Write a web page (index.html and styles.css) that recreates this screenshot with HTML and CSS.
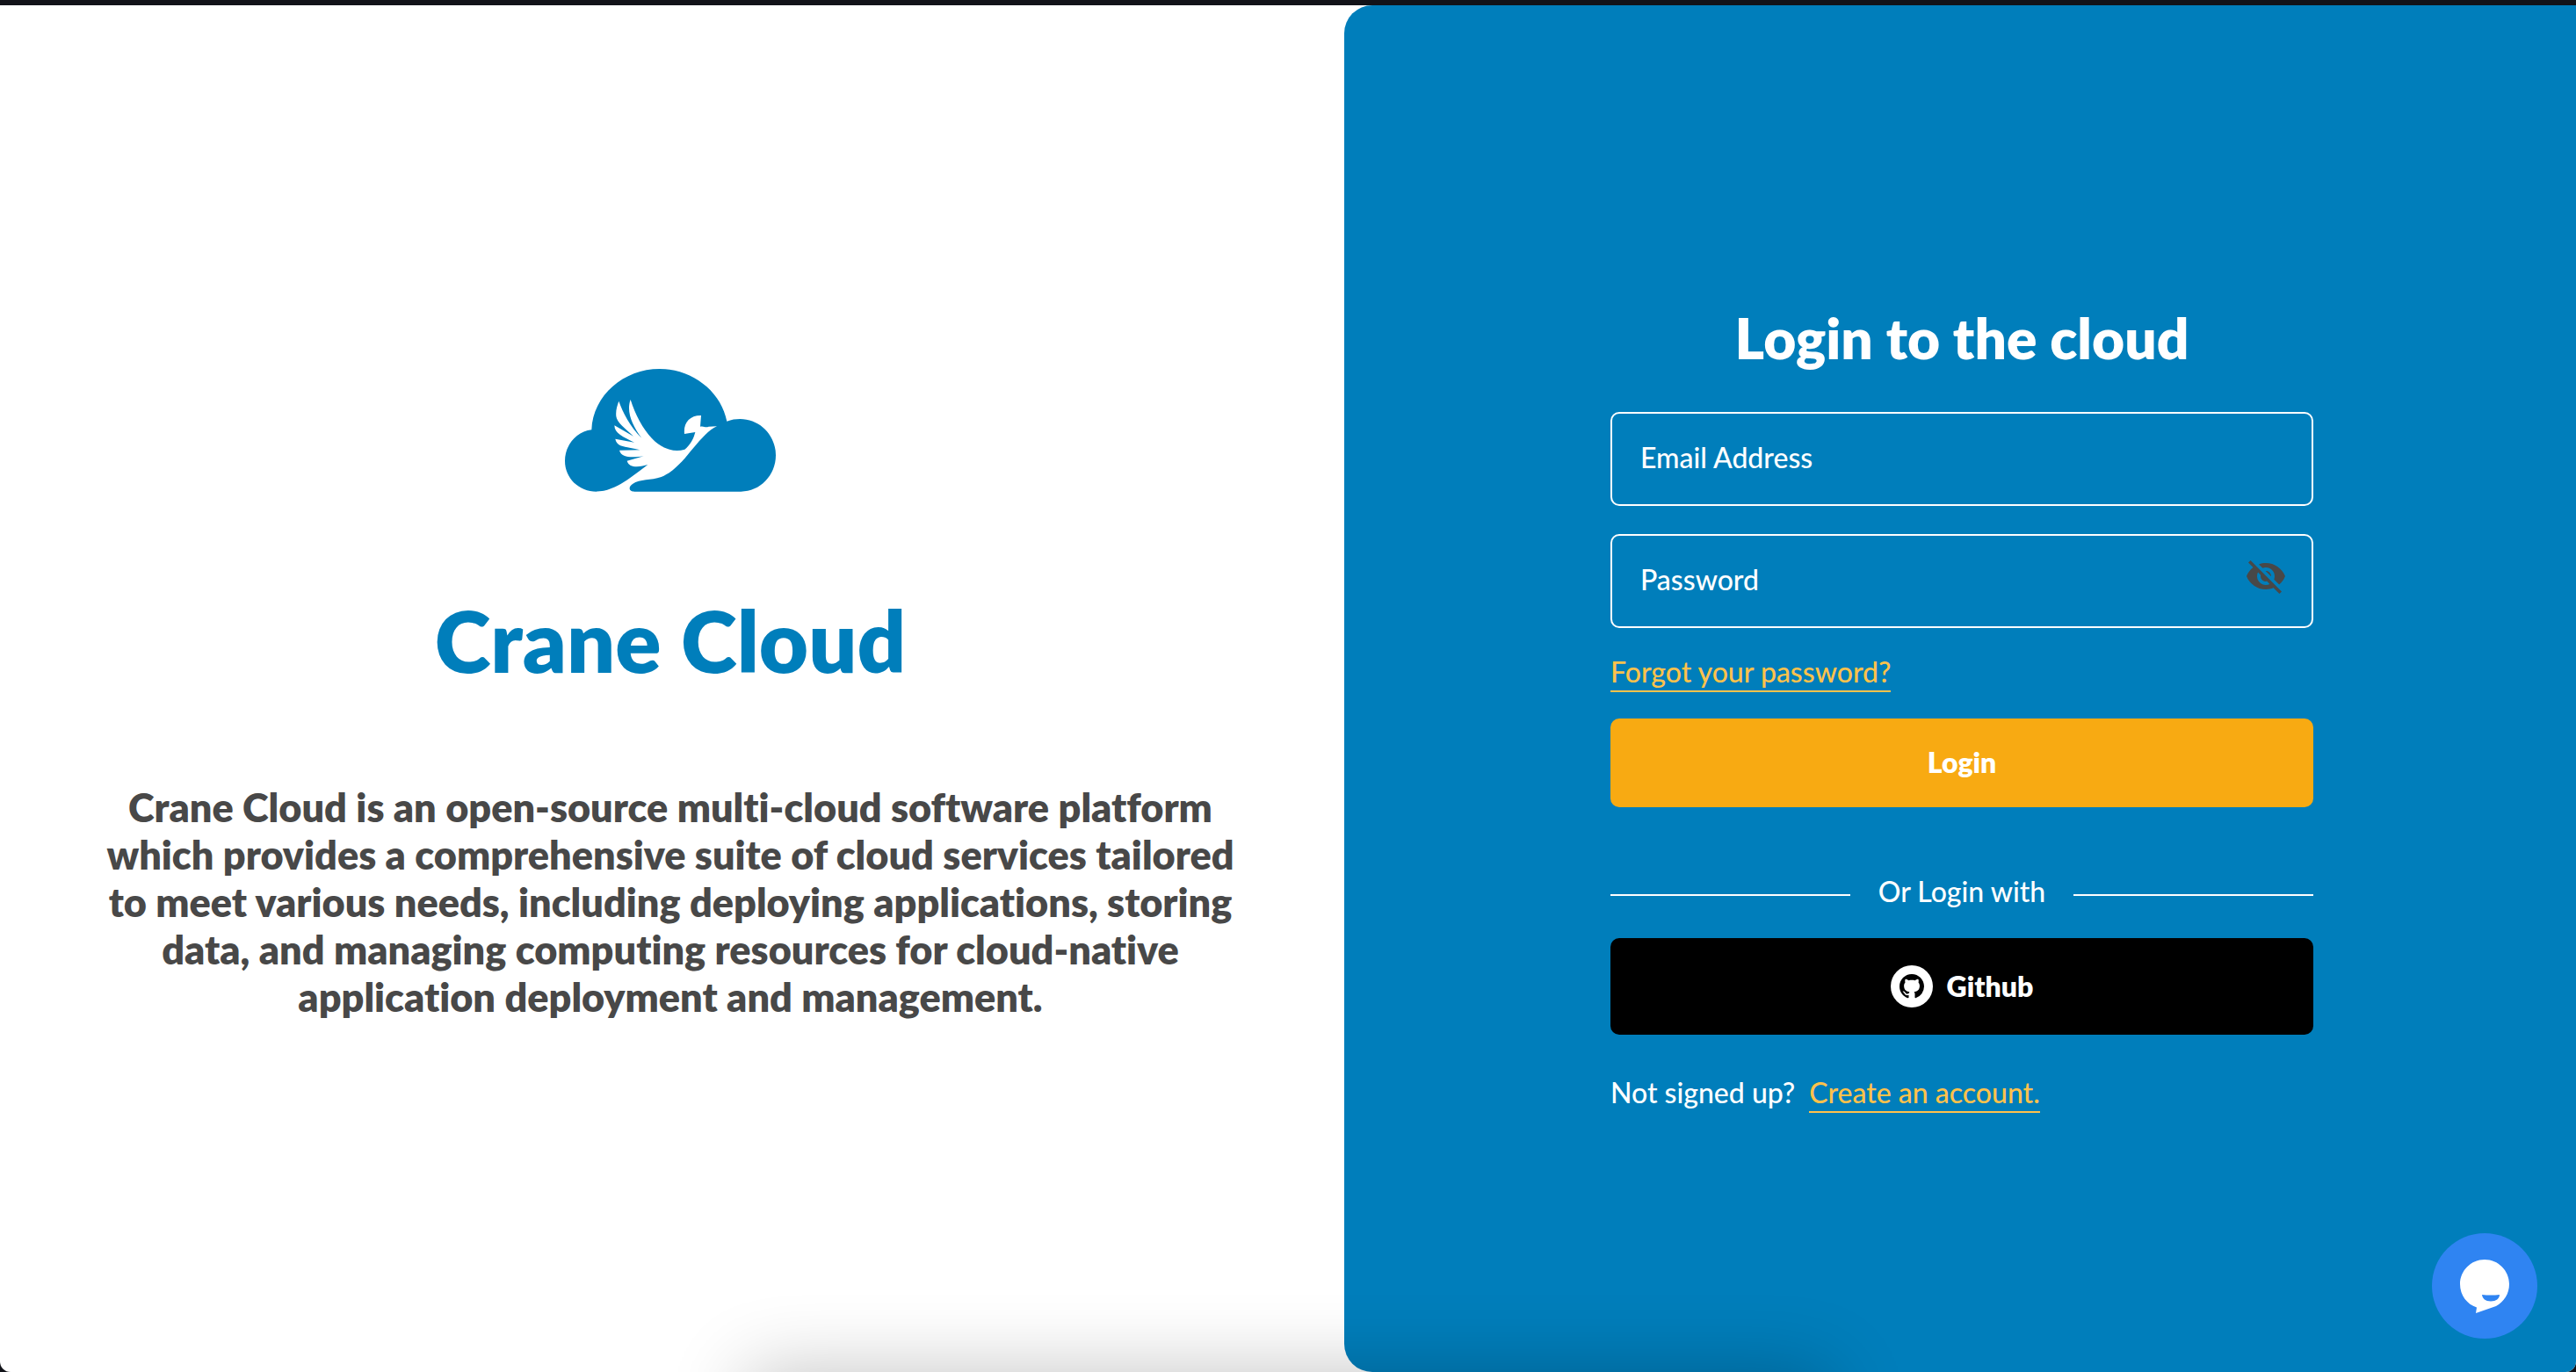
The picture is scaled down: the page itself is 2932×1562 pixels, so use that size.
FILE: index.html
```html
<!DOCTYPE html>
<html lang="en">
<head>
<meta charset="utf-8">
<meta name="viewport" content="width=device-width, initial-scale=1">
<title>Crane Cloud - Login</title>
<link rel="stylesheet" href="styles.css">
</head>
<body>
<div class="app">
  <section class="intro">
    <svg class="logo" viewBox="69 60 720 420" role="img" aria-label="Crane Cloud logo">
      <path fill="#007ebb" d="M160 268C165 150 270 60 392 60C503 60 602 136 622 239C638 233 652 231 667 231C735 231 789 287 789 355C789 424 735 479 670 479L177 479C117 479 69 433 69 374C69 320 108 274 160 268Z"/>
      <path fill="#fff" d="M588 256C560 268 532 302 505 333C475 370 442 411 398 429C362 442 326 435 300 453C284 464 288 479 305 479V482H177V479C245 477 300 425 352 387C330 393 290 403 281 374L338 358C300 363 262 365 255 338L325 337C285 325 246 330 241 299L306 311C268 293 238 280 238 253L303 290C276 265 246 242 244 222C242 202 247 186 253 170C266 207 291 257 331 296C298 253 278 205 293 165C309 215 335 265 365 296C400 333 440 346 478 335C495 322 508 300 514 276L477 282C473 245 495 218 534 219L531 257C545 254 548 263 560 257Z"/>
    </svg>
    <h1 class="brand">Crane Cloud</h1>
    <p class="summary">Crane Cloud is an open-source multi-cloud software platform which provides a comprehensive suite of cloud services tailored to meet various needs, including deploying applications, storing data, and managing computing resources for cloud-native application deployment and management.</p>
  </section>
  <main class="panel">
    <form class="login">
      <h2 class="login-title">Login to the cloud</h2>
      <div class="field">
        <input class="field-input" id="email" type="email" placeholder=" ">
        <label class="field-label" for="email">Email Address</label>
      </div>
      <div class="field">
        <input class="field-input" id="password" type="password" placeholder=" ">
        <label class="field-label" for="password">Password</label>
        <button class="reveal" type="button" aria-label="Show password">
          <svg viewBox="0 0 24 24" width="48" height="48" fill="#484848"><path d="M12 7c2.76 0 5 2.24 5 5 0 .65-.13 1.26-.36 1.83l2.92 2.92c1.51-1.26 2.7-2.89 3.43-4.75-1.73-4.39-6-7.5-11-7.5-1.4 0-2.74.25-3.98.7l2.16 2.16C10.74 7.13 11.35 7 12 7zM2 4.27l2.28 2.28.46.46C3.08 8.3 1.78 10.02 1 12c1.73 4.39 6 7.5 11 7.5 1.55 0 3.03-.3 4.38-.84l.42.42L19.73 22 21 20.73 3.27 3 2 4.27zM7.53 9.8l1.55 1.55c-.05.21-.08.43-.08.65 0 1.66 1.34 3 3 3 .22 0 .44-.03.65-.08l1.55 1.55c-.67.33-1.41.53-2.2.53-2.76 0-5-2.24-5-5 0-.79.2-1.53.53-2.2zm4.31-.78l3.15 3.15.02-.16c0-1.66-1.34-3-3-3l-.17.01z"/></svg>
        </button>
      </div>
      <a class="link forgot" href="#forgot">Forgot your password?</a>
      <button class="button submit" type="submit">Login</button>
      <div class="divider"><span>Or Login with</span></div>
      <button class="button github" type="button">
        <svg viewBox="0 0 48 48" width="48" height="48" aria-hidden="true"><circle cx="24" cy="24" r="24" fill="#fff"/><path transform="translate(10 10) scale(1.75)" fill="#000" d="M8 0C3.58 0 0 3.58 0 8c0 3.54 2.29 6.53 5.47 7.59.4.07.55-.17.55-.38 0-.19-.01-.82-.01-1.49-2.01.37-2.53-.49-2.69-.94-.09-.23-.48-.94-.82-1.13-.28-.15-.68-.52-.01-.53.63-.01 1.08.58 1.23.82.72 1.21 1.87.87 2.33.66.07-.52.28-.87.51-1.07-1.78-.2-3.64-.89-3.64-3.95 0-.87.31-1.59.82-2.15-.08-.2-.36-1.02.08-2.12 0 0 .67-.21 2.2.82.64-.18 1.32-.27 2-.27s1.36.09 2 .27c1.53-1.04 2.2-.82 2.2-.82.44 1.1.16 1.92.08 2.12.51.56.82 1.27.82 2.15 0 3.07-1.87 3.75-3.65 3.95.29.25.54.73.54 1.48 0 1.07-.01 1.93-.01 2.2 0 .21.15.46.55.38A8.01 8.01 0 0 0 16 8c0-4.42-3.58-8-8-8z"/></svg>
        Github
      </button>
      <p class="signup">Not signed up? <a class="link" href="#register">Create an account.</a></p>
    </form>
  </main>
  <div class="dock-shadow"></div>
  <button class="chat" type="button" aria-label="Open chat">
    <svg viewBox="0 0 120 120" width="120" height="120"><path fill="#fff" d="M60 30C75.500 30 88 42.500 88 58C88 69 82 78 73 83L50 91L51 84.500C40 81 32 70.500 32 58C32 42.500 44.500 30 60 30Z"/><path fill="#2f84f2" d="M57 70Q67 71 77 70C77 74.500 73 77.500 67 77.500C61 77.500 57.500 74.500 57 70Z"/></svg>
  </button>
</div>
</body>
</html>
```
FILE: styles.css
```css
* {
  box-sizing: border-box;
}

body {
  margin: 0;
  padding-top: 6px;
  min-height: 100vh;
  display: flex;
  background: #121319;
  color: #fff;
  font: 500 32px/38px Lato, "Open Sans", sans-serif;
  font-variant-ligatures: none;
}

h1, h2, p {
  margin: 0;
}

.app {
  position: relative;
  flex: 1;
  display: grid;
  grid-template-columns: 1530fr 1402fr;
  overflow: hidden;
  background: #fff;
  border-radius: 0 0 12px 12px;
}

.intro {
  display: flex;
  flex-direction: column;
  align-items: center;
  justify-content: center;
  padding: 14px 102px 0 98px;
  text-align: center;
}

.logo {
  width: 240px;
  height: 140px;
}

.brand {
  margin: 110px 0 104px;
  color: #007ebb;
  font-size: 97px;
  font-weight: 800;
  line-height: 118px;
}

.summary {
  max-width: 1320px;
  color: #484848;
  font-size: 45px;
  font-weight: 800;
  line-height: 54px;
}

.panel {
  display: flex;
  flex-direction: column;
  align-items: center;
  justify-content: center;
  padding: 42px 32px 0 36px;
  background: #007ebb;
  border-radius: 32px 0 0 32px;
}

.login {
  display: flex;
  flex-direction: column;
  width: 100%;
  max-width: 800px;
}

.login-title {
  margin-bottom: 46px;
  padding-top: 2px;
  font-size: 64px;
  font-weight: 800;
  line-height: 77px;
  text-align: center;
}

.field {
  display: grid;
  align-items: center;
  margin-bottom: 32px;
}

.field > * {
  grid-area: 1 / 1;
}

.field-label {
  padding: 0 34px 2px;
  pointer-events: none;
}

.field-input:not(:placeholder-shown) + .field-label {
  visibility: hidden;
}

.field-input {
  width: 100%;
  height: 107px;
  padding: 0 32px 2px;
  border: 2px solid #fff;
  border-radius: 10px;
  background: transparent;
  color: #fff;
  font: inherit;
}

.reveal {
  display: flex;
  justify-self: end;
  margin-right: 30px;
  padding: 0 0 10px;
  border: 0;
  background: none;
}

.link {
  padding-bottom: 2px;
  border-bottom: 2px solid #ffc24b;
  color: #ffc24b;
  text-decoration: none;
}

.forgot {
  align-self: flex-start;
  margin-top: -1px;
}

.button {
  display: flex;
  align-items: center;
  justify-content: center;
  gap: 16px;
  border: 0;
  border-radius: 10px;
  color: #fff;
  font: inherit;
  font-weight: 800;
}

.submit {
  height: 101px;
  margin-top: 30px;
  background: #f8aa12;
}

.divider {
  display: flex;
  gap: 32px;
  margin: 77px 0 34px;
}

.divider::before,
.divider::after {
  content: "";
  flex: 1;
  height: 2px;
  margin-top: 22px;
  background: #fff;
}

.github {
  height: 110px;
  background: #000;
}

.signup {
  display: flex;
  gap: 16px;
  margin-top: 47px;
}

.dock-shadow {
  position: absolute;
  top: 100%;
  left: 29%;
  width: 42%;
  height: 120px;
  box-shadow: 0 0 88px rgba(0, 0, 0, 0.24);
  pointer-events: none;
}

.chat {
  position: absolute;
  right: 44px;
  bottom: 38px;
  display: flex;
  padding: 0;
  border: 0;
  border-radius: 50%;
  background: #2f84f2;
}
```
